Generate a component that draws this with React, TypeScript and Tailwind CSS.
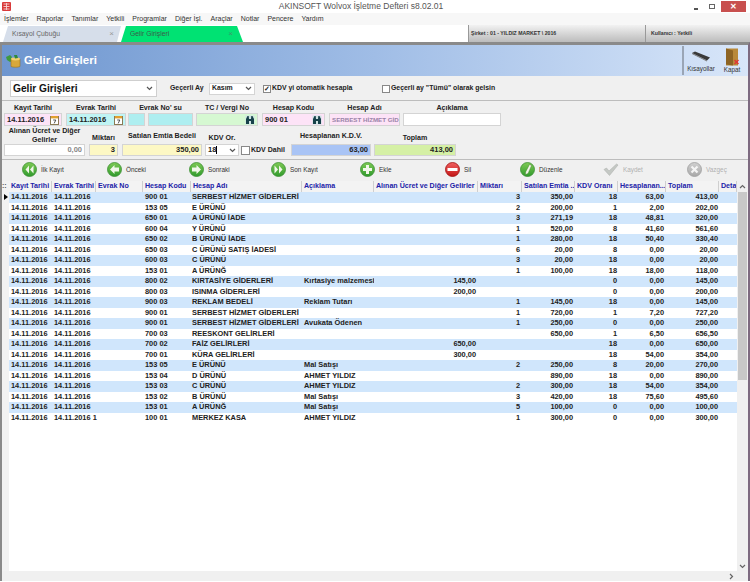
import React from "react";

const F = "font-['Liberation_Sans',sans-serif]";

type Row = [string, string, string, string, string, string, string, string, string, string];
const S = "SERBEST HİZMET GİDERLERİ";
const rows: Row[] = [
  ["14.11.2016", "900 01", S, "", "", "3", "350,00", "18", "63,00", "413,00"],
  ["14.11.2016", "153 05", "E ÜRÜNÜ", "", "", "2", "200,00", "1", "2,00", "202,00"],
  ["14.11.2016", "650 01", "A ÜRÜNÜ İADE", "", "", "3", "271,19", "18", "48,81", "320,00"],
  ["14.11.2016", "600 04", "Y ÜRÜNÜ", "", "", "1", "520,00", "8", "41,60", "561,60"],
  ["14.11.2016", "650 02", "B ÜRÜNÜ İADE", "", "", "1", "280,00", "18", "50,40", "330,40"],
  ["14.11.2016", "650 03", "C ÜRÜNÜ SATIŞ İADESİ", "", "", "6", "20,00", "8", "0,00", "20,00"],
  ["14.11.2016", "600 03", "C ÜRÜNÜ", "", "", "3", "20,00", "18", "0,00", "20,00"],
  ["14.11.2016", "153 01", "A ÜRÜNĞ", "", "", "1", "100,00", "18", "18,00", "118,00"],
  ["14.11.2016", "800 02", "KIRTASİYE GİDERLERİ", "Kırtasiye malzemesi", "145,00", "", "", "0", "0,00", "145,00"],
  ["14.11.2016", "800 03", "ISINMA GİDERLERİ", "", "200,00", "", "", "0", "0,00", "200,00"],
  ["14.11.2016", "900 03", "REKLAM BEDELİ", "Reklam Tutarı", "", "1", "145,00", "18", "0,00", "145,00"],
  ["14.11.2016", "900 01", S, "", "", "1", "720,00", "1", "7,20", "727,20"],
  ["14.11.2016", "900 01", S, "Avukata Ödenen", "", "1", "250,00", "0", "0,00", "250,00"],
  ["14.11.2016", "700 03", "REESKONT GELİRLERİ", "", "", "", "650,00", "1", "6,50", "656,50"],
  ["14.11.2016", "700 02", "FAİZ GELİRLERİ", "", "650,00", "", "", "18", "0,00", "650,00"],
  ["14.11.2016", "700 01", "KÜRA GELİRLERİ", "", "300,00", "", "", "18", "54,00", "354,00"],
  ["14.11.2016", "153 05", "E ÜRÜNÜ", "Mal Satışı", "", "2", "250,00", "8", "20,00", "270,00"],
  ["14.11.2016", "153 04", "D ÜRÜNÜ", "AHMET YILDIZ", "", "", "890,00", "18", "0,00", "890,00"],
  ["14.11.2016", "153 03", "C ÜRÜNÜ", "AHMET YILDIZ", "", "2", "300,00", "18", "54,00", "354,00"],
  ["14.11.2016", "153 02", "B ÜRÜNÜ", "Mal Satışı", "", "3", "420,00", "18", "75,60", "495,60"],
  ["14.11.2016", "153 01", "A ÜRÜNĞ", "Mal Satışı", "", "5", "100,00", "0", "0,00", "100,00"],
  ["14.11.2016 1", "100 01", "MERKEZ KASA", "AHMET YILDIZ", "", "1", "300,00", "0", "0,00", "300,00"],
];

const GRID = "grid grid-cols-[43px_44px_47px_48px_111px_72px_104px_44px_53px_43px_48px_53px_18px]";

const Chevron = ({ c = "#555" }: { c?: string }) => (
  <svg width="7" height="5" viewBox="0 0 7 5"><path d="M1 1l2.5 2.5L6 1" fill="none" stroke={c} strokeWidth="1.2" /></svg>
);

const Calendar = () => (
  <svg width="9" height="10" viewBox="0 0 9 10" className="shrink-0">
    <rect x="0.5" y="1.5" width="8" height="8" fill="#fff" stroke="#8a7a55" />
    <rect x="1" y="1" width="7" height="2.4" fill="#e0a030" />
    <path d="M3.2 5h2.6L4.2 8.4" fill="none" stroke="#444" strokeWidth="0.9" />
  </svg>
);

const Binoc = () => (
  <svg width="10" height="10" viewBox="0 0 10 10" className="shrink-0">
    <rect x="0.5" y="0.5" width="9" height="9" fill="#cfe3e3" />
    <path d="M1 9V4l1.5-3h1.2L4 4h2l.3-3h1.2L9 4v5H6V6H4v3z" fill="#17414a" />
  </svg>
);

const Round = ({ from, to, kind, ring }: { from: string; to: string; kind: string; ring: string }) => {
  const id = kind + from.slice(1);
  return (
    <svg width="15" height="15" viewBox="0 0 15 15" className="shrink-0">
      <defs>
        <linearGradient id={id} x1="0" y1="0" x2="0" y2="1">
          <stop offset="0" stopColor={from} />
          <stop offset="1" stopColor={to} />
        </linearGradient>
      </defs>
      <circle cx="7.5" cy="7.5" r="7" fill={`url(#${id})`} stroke={ring} strokeWidth="0.8" />
      {kind === "first" && <path d="M7 3.5L3.5 7.5 7 11.5zM11.5 3.5L8 7.5l3.5 4z" fill="#f2f7ea" />}
      {kind === "prev" && <path d="M7.5 3L3 7.5 7.5 12V9.4H12V5.6H7.5z" fill="#f2f7ea" />}
      {kind === "next" && <path d="M7.5 3L12 7.5 7.5 12V9.4H3V5.6h4.5z" fill="#f2f7ea" />}
      {kind === "last" && <path d="M3.5 3.5L7 7.5l-3.5 4zM8 3.5l3.5 4-3.5 4z" fill="#f2f7ea" />}
      {kind === "add" && <path d="M6 3h3v3h3v3H9v3H6V9H3V6h3z" fill="#f2f7ea" />}
      {kind === "del" && <rect x="2.5" y="6" width="10" height="3" fill="#fff" />}
      {kind === "edit" && <path d="M9.5 2.5l2 1-3.5 8-2.5 1 .2-2.6z" fill="#f2f7ea" stroke="#4a7a2a" strokeWidth="0.4" />}
      {kind === "x" && <path d="M4.5 4.5l6 6M10.5 4.5l-6 6" stroke="#f4f4f4" strokeWidth="2.2" />}
    </svg>
  );
};

const Tick = () => (
  <svg width="16" height="13" viewBox="0 0 16 13" className="shrink-0">
    <path d="M1 6.5l2.5-1.5L6 8l7.5-7L15 2 6.5 12.5z" fill="#c4c8c4" stroke="#a8aca8" strokeWidth="0.5" />
  </svg>
);

const G = ["#7fca55", "#2f9a2c", "#3d8f35"];
const buttons = [
  { t: "İlk Kayıt", k: "first", w: "w-[85px]" },
  { t: "Önceki", k: "prev", w: "w-[82px]" },
  { t: "Sonraki", k: "next", w: "w-[82px]" },
  { t: "Son Kayıt", k: "last", w: "w-[89px]" },
  { t: "Ekle", k: "add", w: "w-[85px]" },
  { t: "Sil", k: "del", w: "w-[75px]" },
  { t: "Düzenle", k: "edit", w: "w-[83px]" },
  { t: "Kaydet", k: "tick", w: "w-[84px]" },
  { t: "Vazgeç", k: "x", w: "w-[50px]" },
];

const Field = ({ label, w, ml, children, h }: { label: string; w: string; ml?: string; children: React.ReactNode; h?: string }) => (
  <div className={`flex flex-col items-center ${w} ${ml ?? ""}`}>
    <div className={`font-bold text-[7.1px] leading-[8.5px] text-center text-[#222] flex items-end justify-center ${h ?? "h-[12px] pb-[1px]"}`}>{label}</div>
    {children}
  </div>
);

const Box = ({ bg, children, cls }: { bg: string; children?: React.ReactNode; cls?: string }) => (
  <div className={`w-full border border-[#d4d4d4] flex items-center justify-between px-[2px] font-bold text-[7.5px] text-[#222] ${bg} ${cls ?? ""}`}>{children}</div>
);

export default function App() {
  return (
    <div className={`w-[750px] h-[582px] bg-white overflow-hidden flex flex-col ${F}`}>
      {/* title bar */}
      <div className="h-[13px] flex items-center bg-white shrink-0">
        <svg width="11" height="11" viewBox="0 0 11 11" className="ml-[1px] shrink-0">
          <rect x="1" y="1" width="9" height="9" rx="1" fill="#d93a3a" />
          <path d="M2.5 3h6M2.5 5.5h6M2.5 8h6M5.5 2v7" stroke="#f6d6d6" strokeWidth="0.9" />
        </svg>
        <div className="flex-1 text-center text-[8.5px] leading-none text-[#555] pl-[16px]">AKINSOFT Wolvox İşletme Defteri s8.02.01</div>
        <div className="flex items-center shrink-0 mr-[4px]">
          <div className="w-[4px] h-[2px] bg-[#555] mt-[4px] mr-[11px]" />
          <div className="w-[6px] h-[5px] border border-[#666] mr-[6px]" />
          <div className="w-[25px] h-[11px] bg-[#c8504f] text-white text-[8px] font-bold flex items-center justify-center">✕</div>
        </div>
      </div>
      {/* menu */}
      <div className="h-[12px] flex items-center gap-[8px] pl-[4px] bg-[#f7f7f7] text-[7px] text-[#333] shrink-0">
        {["İşlemler", "Raporlar", "Tanımlar", "Yetkili", "Programlar", "Diğer İşl.", "Araçlar", "Notlar", "Pencere", "Yardım"].map((m) => (
          <span key={m}>{m}</span>
        ))}
      </div>
      {/* tabs */}
      <div className="h-[17px] flex items-end shrink-0 bg-white">
        <div className="w-[118px] h-[16px] ml-[3px] bg-[#d6deea] [clip-path:polygon(5px_0,100%_0,100%_0,calc(100%-4px)_100%,0_100%)] flex items-center justify-between pl-[9px] pr-[5px] text-[6.8px] text-[#666]">
          <span>Kısayol Çubuğu</span>
          <span className="text-[8px] text-[#999] mr-[2px]">×</span>
        </div>
        <div className="w-[122px] h-[16px] bg-[#00e273] [clip-path:polygon(5px_0,calc(100%-6px)_0,100%_100%,0_100%)] flex items-center justify-between pl-[9px] pr-[10px] text-[6.8px] text-[#3d5a4a]">
          <span>Gelir Girişleri</span>
          <span className="text-[8px] text-[#3a9a6a]">×</span>
        </div>
        <div className="flex-1 h-full" />
        <div className="w-[177px] h-full border-l border-[#999] bg-gradient-to-b from-[#f2f2f2] to-[#bcbcbc] flex items-center pl-[2px] font-bold text-[5.2px] text-[#333]">Şirket : 01 - YILDIZ MARKET \ 2016</div>
        <div className="w-[105px] h-full border-l border-[#999] bg-gradient-to-b from-[#f2f2f2] to-[#bcbcbc] flex items-center pl-[5px] font-bold text-[5.2px] text-[#333]">Kullanıcı : Yetkili</div>
      </div>
      {/* window */}
      <div className="flex-1 min-h-0 mb-[1px] flex flex-col border-t-[3px] border-l-[2px] border-r-[2px] border-t-[#8a8a8a] border-l-[#8a8a8a] border-r-[#7d6a80] bg-[#f0f0f0]">
        {/* header */}
        <div className="h-[31px] shrink-0 flex items-center bg-gradient-to-r from-[#6e96cf] via-[#a0bde6] to-[#d8e6f9]">
          <svg width="17" height="14" viewBox="0 0 17 14" className="ml-[3px] shrink-0">
            <path d="M1 3l4-2 2 2-1 2 1 2-2 1-3-2z" fill="#3f9a3f" />
            <path d="M6 5h9v7.5c-2 1-7 1-9 0z" fill="#d8a83a" stroke="#9a7420" strokeWidth="0.6" />
            <ellipse cx="10.5" cy="5" rx="4.5" ry="1.4" fill="#f0d070" />
            <path d="M9 1l3 0 1 3-3 .5z" fill="#2f8a3a" />
          </svg>
          <span className="ml-[2px] font-bold text-white text-[11.5px]">Gelir Girişleri</span>
          <div className="flex-1" />
          <div className="w-[2px] h-[29px] bg-[#9aa5b5] mr-[3px]" />
          <div className="flex flex-col items-center w-[28px] pt-[3px] text-[6.3px] text-[#333]">
            <svg width="20" height="13" viewBox="0 0 20 13">
              <path d="M1 2l3-1.5 15 6-3 3z" fill="#3a3a3a" />
              <path d="M1 2l15 7.5v1L1 3z" fill="#777" />
            </svg>
            <span className="leading-[10px]">Kısayollar</span>
          </div>
          <div className="flex flex-col items-center w-[28px] ml-[3px] mr-[2px] text-[6.3px] text-[#333]">
            <svg width="15" height="18" viewBox="0 0 15 18">
              <rect x="1" y="0.5" width="12" height="17" fill="#b8893a" />
              <path d="M1 .5l7 2v15l-7-1z" fill="#8d6424" />
              <path d="M9.5 12l4 4M13.5 12l-4 4" stroke="#e03535" strokeWidth="1.4" />
            </svg>
            <span className="leading-[8px]">Kapat</span>
          </div>
        </div>
        {/* row 1 */}
        <div className="h-[25px] shrink-0 flex items-center border-b border-[#bdbdbd] pl-[8px] pt-[1px]">
          <div className="w-[147px] h-[17px] bg-white border border-[#cfcfcf] flex items-center justify-between pl-[2px] pr-[3px] font-bold text-[10.2px] text-[#111]">
            <span>Gelir Girişleri</span>
            <Chevron />
          </div>
          <span className="ml-[13px] w-[33px] whitespace-nowrap font-bold text-[6.9px] text-[#222]">Geçerli Ay</span>
          <div className="ml-[6px] w-[46px] h-[12px] bg-white border border-[#d4d4d4] flex items-center justify-between px-[2px] font-bold text-[6.9px] text-[#222]">
            <span>Kasım</span>
            <Chevron />
          </div>
          <div className="ml-[8px] w-[8px] h-[8px] bg-white border border-[#888] flex items-center justify-center text-[7px] leading-none font-bold text-[#222]">✓</div>
          <span className="ml-[1px] w-[80px] whitespace-nowrap font-bold text-[6.9px] text-[#222]">KDV yi otomatik hesapla</span>
          <div className="ml-[30px] w-[8px] h-[8px] bg-white border border-[#888]" />
          <span className="ml-[1px] whitespace-nowrap font-bold text-[6.9px] text-[#222]">Geçerli ay "Tümü" olarak gelsin</span>
        </div>
        {/* row 2 */}
        <div className="shrink-0 flex pl-[2px] h-[26px]">
          <Field label="Kayıt Tarihi" w="w-[58px]"><Box bg="bg-[#fde3f7]" cls="h-[13px]"><span>14.11.2016</span><Calendar /></Box></Field>
          <Field label="Evrak Tarihi" w="w-[60px]" ml="ml-[4px]"><Box bg="bg-[#bff4f4]" cls="h-[13px]"><span>14.11.2016</span><Calendar /></Box></Field>
          <Field label="Evrak No' su" w="w-[65px]" ml="ml-[2px]">
            <div className="w-full flex gap-[3px]">
              <div className="w-[17px]"><Box bg="bg-[#aeeef0]" cls="h-[13px]" /></div>
              <div className="flex-1"><Box bg="bg-[#aeeef0]" cls="h-[13px]" /></div>
            </div>
          </Field>
          <Field label="TC / Vergi No" w="w-[62px]" ml="ml-[3px]"><Box bg="bg-[#d6f8d2]" cls="h-[13px] justify-end"><Binoc /></Box></Field>
          <Field label="Hesap Kodu" w="w-[63px]" ml="ml-[4px]"><Box bg="bg-[#fde3f7]" cls="h-[13px]"><span>900 01</span><Binoc /></Box></Field>
          <Field label="Hesap Adı" w="w-[71px]" ml="ml-[4px]"><Box bg="bg-[#fde3f7]" cls="h-[13px]"><span className="whitespace-nowrap text-[#9a84a8] text-[6.2px]">SERBEST HİZMET GİD</span></Box></Field>
          <Field label="Açıklama" w="w-[98px]" ml="ml-[3px]"><Box bg="bg-white" cls="h-[13px]" /></Field>
        </div>
        {/* row 3 */}
        <div className="shrink-0 flex items-end pl-[2px] h-[33px] border-b border-[#bdbdbd] pb-[3px]">
          <Field label="Alınan Ücret ve Diğer Gelirler" w="w-[81px]" h="pb-0"><Box bg="bg-white" cls="h-[12px] justify-end text-[#888]">0,00</Box></Field>
          <Field label="Miktarı" w="w-[29px]" ml="ml-[4px]" h="pb-[2px]"><Box bg="bg-[#fdf8c4]" cls="h-[12px] justify-end">3</Box></Field>
          <Field label="Satılan Emtia Bedeli" w="w-[80px]" ml="ml-[4px]" h="pb-[4px]"><Box bg="bg-[#fdf8c4]" cls="h-[12px] justify-end">350,00</Box></Field>
          <Field label="KDV Or." w="w-[34px]" ml="ml-[3px]" h="pb-[2px]">
            <Box bg="bg-white" cls="h-[12px] border-[#7aa0d0]">
              <span className="flex items-center">18<span className="w-px h-[8px] bg-black" /></span>
              <Chevron />
            </Box>
          </Field>
          <div className="ml-[2px] w-[41px] h-[12px] flex items-center">
            <div className="w-[9px] h-[9px] bg-white border border-[#888] shrink-0" />
            <span className="ml-[1px] whitespace-nowrap font-bold text-[7px] text-[#222]">KDV Dahil</span>
          </div>
          <Field label="Hesaplanan K.D.V." w="w-[80px]" ml="ml-[9px]" h="pb-[4px]"><Box bg="bg-[#a9c4f5]" cls="h-[12px] justify-end">63,00</Box></Field>
          <Field label="Toplam" w="w-[82px]" ml="ml-[3px]" h="pb-[2px]"><Box bg="bg-[#d5f0a5]" cls="h-[12px] justify-end">413,00</Box></Field>
        </div>
        {/* buttons */}
        <div className="h-[21px] shrink-0 flex items-center pl-[20px] pb-[2px]">
          {buttons.map((b) => {
            const dis = b.k === "tick" || b.k === "x";
            return (
              <div key={b.t} className={`${b.w} shrink-0 flex items-center gap-[4px] text-[6.4px]`}>
                {b.k === "tick" ? <Tick /> : b.k === "x" ? (
                  <Round from="#d0d0d0" to="#a8a8a8" ring="#a0a0a0" kind="x" />
                ) : b.k === "del" ? (
                  <Round from="#f06060" to="#c41616" ring="#a01010" kind="del" />
                ) : (
                  <Round from={G[0]} to={G[1]} ring={G[2]} kind={b.k} />
                )}
                <span className={dis ? "text-[#b0b0b0]" : "text-[#333]"}>{b.t}</span>
              </div>
            );
          })}
        </div>
        {/* grid */}
        <div className="flex-1 min-h-0 flex flex-col bg-white">
          <div className="flex-1 min-h-0 flex">
            <div className="w-[7px] shrink-0 flex flex-col bg-[#f2f2f2]">
              <div className="h-[11px] text-[7px] leading-[10px] text-[#555] font-bold">::</div>
              <div className="h-[10.5px] flex items-center justify-center">
                <div className="w-0 h-0 border-y-[3px] border-y-transparent border-l-[4px] border-l-black" />
              </div>
            </div>
            <div className="flex-1 min-w-0 flex flex-col">
              <div className={`${GRID} h-[11px] shrink-0 bg-[#f3f3f3]`}>
                {["Kayıt Tarihi", "Evrak Tarihi", "Evrak No", "Hesap Kodu", "Hesap Adı", "Açıklama", "Alınan Ücret ve Diğer Gelirler", "Miktarı", "Satılan Emtia ...", "KDV Oranı", "Hesaplanan...", "Toplam", "Deta"].map((h) => (
                  <div key={h} className="border-r border-[#cfcfcf] pl-[2px] font-bold text-[7.1px] leading-[10.5px] text-[#2222a8] whitespace-nowrap overflow-hidden">{h}</div>
                ))}
              </div>
              {rows.map((r, i) => (
                <div key={i} className={`${GRID} h-[10.52px] shrink-0 font-bold text-[7.4px] leading-[10.5px] text-[#222] whitespace-nowrap ${i % 2 === 0 ? "bg-[#d0e6fc]" : "bg-white"}`}>
                  <div className="pl-[2px]">{r[0].split(" ")[0]}</div>
                  <div className="pl-[2px] col-span-2">{r[0]}</div>
                  <div className="pl-[2px]">{r[1]}</div>
                  <div className="pl-[1px]">{r[2]}</div>
                  <div className="pl-[2px] overflow-hidden">{r[3]}</div>
                  <div className="text-right pr-[2px]">{r[4]}</div>
                  <div className="text-right pr-[2px]">{r[5]}</div>
                  <div className="text-right pr-[2px]">{r[6]}</div>
                  <div className="text-right pr-[1px]">{r[7]}</div>
                  <div className="text-right pr-[2px]">{r[8]}</div>
                  <div className="text-right pr-[1px]">{r[9]}</div>
                  <div />
                </div>
              ))}
            </div>
            <div className="w-[11px] shrink-0 bg-[#f0f0f0] flex flex-col items-center">
              <div className="h-[11px] flex items-center rotate-180"><Chevron c="#666" /></div>
              <div className="w-[9px] h-[188px] bg-[#c8c8c8]" />
              <div className="flex-1" />
              <div className="h-[10px] flex items-center"><Chevron c="#666" /></div>
            </div>
          </div>
          <div className="h-[10px] shrink-0 bg-[#f0f0f0] flex items-center justify-end pr-[13px]">
            <div className="-rotate-90"><Chevron c="#666" /></div>
          </div>
        </div>
      </div>
    </div>
  );
}
